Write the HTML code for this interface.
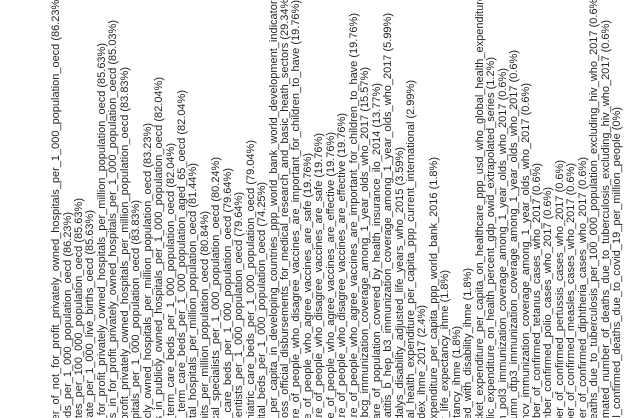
<!DOCTYPE html>
<html><head><meta charset="utf-8"><style>
html,body{margin:0;padding:0;width:638px;height:418px;overflow:hidden;background:#fff;position:relative;}
#c{position:absolute;left:0;top:0;width:638px;height:418px;overflow:hidden;}
.l{position:absolute;writing-mode:vertical-rl;transform:rotate(180deg);font-family:"Liberation Sans",Arial,sans-serif;font-size:11px;line-height:12px;width:12px;color:#262626;white-space:nowrap;}
</style></head><body>
<div id="c"></div>
<script>
var L=[
[-4,"number_of_not_for_profit_privately_owned_hospitals_per_1_000_population_oecd (86.23%)"],
[212,"total_hospital_beds_per_1_000_population_oecd (86.23%)"],
[198,"medical_graduates_per_100_000_population_oecd (85.63%)"],
[210,"infant_mortality_rate_per_1_000_live_births_oecd (85.63%)"],
[43,"number_of_not_for_profit_privately_owned_hospitals_per_million_population_oecd (85.63%)"],
[20,"number_of_beds_in_for_profit_privately_owned_hospitals_per_1_000_population_oecd (85.03%)"],
[67,"number_of_for_profit_privately_owned_hospitals_per_million_population_oecd (83.83%)"],
[200,"number_of_hospitals_per_1_000_population_oecd (83.83%)"],
[123,"number_of_publicly_owned_hospitals_per_million_population_oecd (83.23%)"],
[77,"number_of_beds_in_publicly_owned_hospitals_per_1_000_population_oecd (82.04%)"],
[143,"number_of_long_term_care_beds_per_1_000_population_oecd (82.04%)"],
[90,"number_of_long_term_care_beds_per_1_000_population_aged_65_oecd (82.04%)"],
[163,"number_of_total_hospitals_per_million_population_oecd (81.44%)"],
[211,"number_of_mri_units_per_million_population_oecd (80.84%)"],
[157,"number_of_medical_specialists_per_1_000_population_oecd (80.24%)"],
[168,"number_of_curative_care_beds_per_1_000_population_oecd (79.64%)"],
[192,"number_of_dentists_per_1_000_population_oecd (79.64%)"],
[140,"number_of_psychiatric_care_beds_per_1_000_population_oecd (79.04%)"],
[182,"number_of_hospital_beds_per_1_000_population_oecd (74.25%)"],
[-5,"government_expenditure_on_health_per_capita_in_developing_countries_ppp_world_bank_world_development_indicators"],
[-5,"total_gross_official_disbursements_for_medical_research_and_basic_heath_sectors (29.34%)"],
[0,"share_of_people_who_disagree_vaccines_are_important_for_children_to_have (19.76%)"],
[153,"share_of_people_who_agree_vaccines_are_safe (19.76%)"],
[133,"share_of_people_who_disagree_vaccines_are_safe (19.76%)"],
[132,"share_of_people_who_agree_vaccines_are_effective (19.76%)"],
[113,"share_of_people_who_disagree_vaccines_are_effective (19.76%)"],
[13,"share_of_people_who_agree_vaccines_are_important_for_children_to_have (19.76%)"],
[67,"bcg_immunization_coverage_among_1_year_olds_who_2017 (15.57%)"],
[83,"share_of_population_covered_by_health_insurance_ilo_2014 (13.77%)"],
[13,"hepatitis_b_hep_b3_immunization_coverage_among_1_year_olds_who_2017 (5.99%)"],
[147,"dalys_disability_adjusted_life_years_who_2015 (3.59%)"],
[80,"total_health_expenditure_per_capita_ppp_current_international (2.99%)"],
[305,"healthcare_access_and_quality_index_ihme_2017 (2.4%)"],
[157,"total_health_expenditure_per_capita_ppp_world_bank_2016 (1.8%)"],
[270,"healthy_life_expectancy_ihme (1.8%)"],
[326,"life_expectancy_ihme (1.8%)"],
[268,"years_lived_with_disability_ihme (1.8%)"],
[-5,"out_of_pocket_expenditure_per_capita_on_healthcare_ppp_usd_who_global_health_expenditure"],
[57,"public_expenditure_on_health_percent_gdp_owid_extrapolated_series (1.2%)"],
[68,"pol3_immunization_coverage_among_1_year_olds_who_2017 (0.6%)"],
[50,"dtp3_immunization_coverage_among_1_year_olds_who_2017 (0.6%)"],
[83,"mcv_immunization_coverage_among_1_year_olds_who_2017 (0.6%)"],
[163,"number_of_confirmed_tetanus_cases_who_2017 (0.6%)"],
[187,"number_confirmed_polio_cases_who_2017 (0.6%)"],
[160,"number_of_confirmed_pertussis_cases_who_2017 (0.6%)"],
[163,"number_of_confirmed_measles_cases_who_2017 (0.6%)"],
[157,"number_of_confirmed_diphtheria_cases_who_2017 (0.6%)"],
[-5,"estimated_deaths_due_to_tuberculosis_per_100_000_population_excluding_hiv_who_2017 (0.6%)"],
[20,"estimated_number_of_deaths_due_to_tuberculosis_excluding_hiv_who_2017 (0.6%)"],
[107,"total_confirmed_deaths_due_to_covid_19_per_million_people (0%)"]
];
var P="world_health_indicators_dataset_column_";
var h="";
for(var i=0;i<L.length;i++){
  var cx=56+11.45*i;
  h+='<div class="l" style="left:'+(cx-6).toFixed(1)+'px;top:'+L[i][0]+'px">'+P+P+L[i][1]+'</div>';
}
document.getElementById("c").innerHTML=h;
</script>
</body></html>
